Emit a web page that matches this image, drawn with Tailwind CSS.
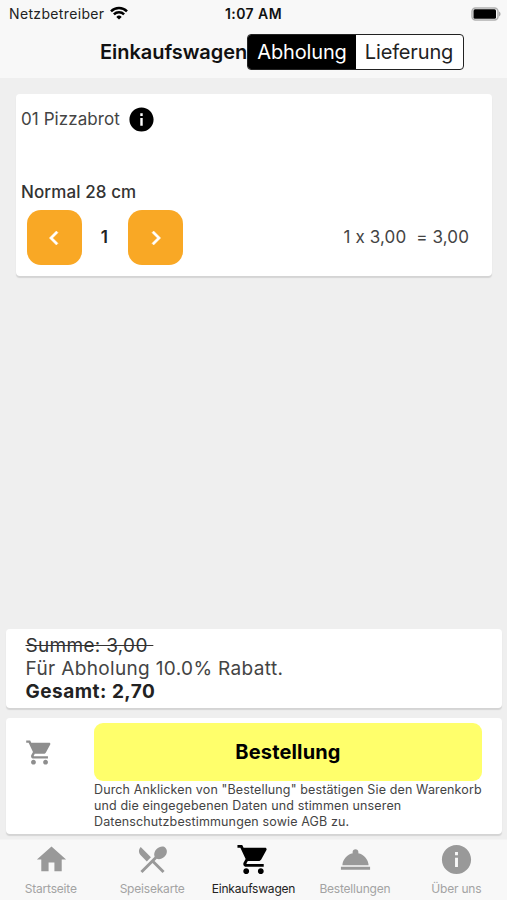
<!DOCTYPE html>
<html lang="de">
<head>
<meta charset="utf-8">
<title>Einkaufswagen</title>
<script src="https://cdn.jsdelivr.net/npm/@tailwindcss/browser@4"></script>
</head>
<body class="w-[507px] h-[900px] overflow-hidden bg-[#efefef] font-['Inter',sans-serif] [font-feature-settings:'calt'_0] text-[#333] flex flex-col whitespace-nowrap">
<svg class="hidden">
  <symbol id="cart" viewBox="0 0 24 24"><path d="M7 18c-1.1 0-1.99.9-1.99 2S5.9 22 7 22s2-.9 2-2-.9-2-2-2zM1 2v2h2l3.6 7.59-1.35 2.45c-.16.28-.25.61-.25.96 0 1.1.9 2 2 2h12v-2H7.42c-.14 0-.25-.11-.25-.25l.03-.12.9-1.63h7.45c.75 0 1.41-.41 1.75-1.03l3.58-6.49c.08-.14.12-.31.12-.48 0-.55-.45-1-1-1H5.21l-.94-2H1zm16 16c-1.1 0-1.99.9-1.99 2s.89 2 1.99 2 2-.9 2-2-.9-2-2-2z"/></symbol>
  <symbol id="info" viewBox="0 0 24 24"><path d="M12 2C6.480 2 2 6.480 2 12s4.480 10 10 10 10-4.480 10-10S17.520 2 12 2zm1 15.200h-2v-6.400h2v6.400zm0-8.100h-2V6.900h2v2.200z"/></symbol>
</svg>

<header class="h-[78px] shrink-0 bg-[#f8f8f8] flex flex-col">
  <div class="h-7 grid grid-cols-3 items-center text-[#111] text-[14px] leading-[28px]">
    <div class="flex items-center pl-[9px]">
      <span class="tracking-[0.350px] text-[#222]">Netzbetreiber</span>
      <svg class="ml-[6px] w-[18px] h-[14px] -mt-[2px]" viewBox="0 0 18 14" fill="none" stroke="#000" stroke-width="2.500">
        <path d="M1 5.300a11.400 11.400 0 0 1 16 0M3.900 8.300a7.200 7.200 0 0 1 10.200 0"/>
        <path d="M9 13.600L6.300 10.900a3.900 3.900 0 0 1 5.400 0z" fill="#000" stroke="none"/>
      </svg>
    </div>
    <div class="text-center font-semibold tracking-[0.450px]">1:07 AM</div>
    <div class="flex justify-end pr-[6px]">
      <svg class="w-[30px] h-[14px]" viewBox="0 0 30 14">
        <rect x="1" y="1" width="26" height="12" rx="3.500" fill="#f8f8f8" stroke="#b0b0b0" stroke-width="1.500"/>
        <rect x="2.500" y="2.300" width="22.500" height="9.400" rx="1.500" fill="#000"/>
        <path d="M28 4.500c2 .8 2 4.200 0 5z" fill="#aaa"/>
      </svg>
    </div>
  </div>
  <div class="flex pl-[100px] pt-[6px] text-[20px] leading-[35px]">
    <h1 class="w-[147px] pt-px font-semibold tracking-[-0.050px] text-[#111]">Einkaufswagen</h1>
    <div class="w-[217px] h-[36px] flex border border-[#222] rounded-[4px] bg-white overflow-hidden tracking-[-0.150px]">
      <div class="w-[108px] bg-black text-white text-center">Abholung</div>
      <div class="flex-1 pr-px text-center text-[#222]">Lieferung</div>
    </div>
  </div>
</header>

<main class="flex-1 flex flex-col">
  <section class="mt-4 mx-auto w-[476px] h-[182px] rounded-[4px] bg-white shadow-[0_2px_1px_#d4d4d4] flex flex-col relative left-[0.500px]">
    <div class="h-[51px] flex items-center pl-[5px] text-[17px] text-[#444]">
      <span class="tracking-[0.080px]">01 Pizzabrot</span>
      <svg class="ml-[7px] size-[29px]" fill="#000"><use href="#info"/></svg>
    </div>
    <div class="mt-[35px] pl-[5px] text-[17px] leading-[24px] font-medium tracking-[0.100px]">Normal 28 cm</div>
    <div class="mt-[6px] h-[55px] pl-[10.500px] pr-[23px] flex items-center text-[17px]">
      <button class="size-[55px] rounded-[14px] bg-[#f9a825] flex items-center justify-center"><svg class="size-[28px]" viewBox="0 0 24 24" fill="#fff" stroke="#fff" stroke-width=".4"><path d="M15.410 7.410L14 6l-6 6 6 6 1.410-1.410L10.830 12z"/></svg></button>
      <span class="w-[46.500px] pr-px text-center font-semibold text-[#222]">1</span>
      <button class="size-[55px] rounded-[14px] bg-[#f9a825] flex items-center justify-center"><svg class="size-[28px]" viewBox="0 0 24 24" fill="#fff" stroke="#fff" stroke-width=".4"><path d="M10 6L8.590 7.410 13.170 12l-4.580 4.590L10 18l6-6z"/></svg></button>
      <span class="ml-auto whitespace-pre tracking-[0.130px] text-[#444]">1 x 3,00  = 3,00</span>
    </div>
  </section>

  <div class="flex-1"></div>

  <section class="mx-auto w-[496px] h-[79px] rounded-[4px] bg-white shadow-[0_2px_1px_#d4d4d4] pl-[19.500px] pt-[5px] text-[19px] leading-[23px] relative left-[0.500px]">
    <div><span class="line-through whitespace-pre tracking-[0.300px]">Summe: 3,00 </span></div>
    <div class="text-[#444] tracking-[0.350px]">Für Abholung 10.0% Rabatt.</div>
    <div class="font-bold text-[#222] tracking-[0.500px]">Gesamt: 2,70</div>
  </section>

  <section class="mt-[10px] mb-[5px] mx-auto w-[496px] h-[116px] rounded-[4px] bg-white shadow-[0_2px_1px_#d4d4d4] flex relative left-[0.500px]">
    <div class="w-[88px] pl-[19px] pt-[20px]"><svg class="size-[29px]" fill="#8e8e8e"><use href="#cart"/></svg></div>
    <div class="pt-[5px]">
      <button class="block w-[388px] h-[58px] rounded-[9px] bg-[#ffff6b] text-[20px] font-bold tracking-[0.150px] text-black">Bestellung</button>
      <p class="mt-px text-[12.500px] leading-[16px] tracking-[0.130px] text-[#444]">Durch Anklicken von "Bestellung" bestätigen Sie den Warenkorb<br>und die eingegebenen Daten und stimmen unseren<br>Datenschutzbestimmungen sowie AGB zu.</p>
    </div>
  </section>
</main>

<nav class="h-[61px] shrink-0 bg-[#f8f8f8] border-t border-[#f3f3f3] grid grid-cols-5 text-[12px] leading-[14px] tracking-[-0.200px] text-[#a3a3a3] fill-[#999] pt-[2px]">
  <div class="flex flex-col items-center"><svg class="size-[35px] relative left-px" viewBox="0 0 24 24"><path d="M10 20v-6h4v6h5v-8h3L12 3 2 12h3v8z"/></svg><span class="mt-[5px]">Startseite</span></div>
  <div class="flex flex-col items-center"><svg class="size-[35px] relative left-[0.500px]" viewBox="0 0 24 24"><path d="M8.100 13.340l2.830-2.830L3.910 3.500c-1.560 1.560-1.560 4.090 0 5.660l4.190 4.180zm6.780-1.810c1.530.71 3.680.21 5.270-1.380 1.910-1.910 2.280-4.650.81-6.120-1.460-1.460-4.200-1.100-6.120.81-1.590 1.590-2.090 3.740-1.380 5.270L3.700 19.870l1.410 1.410L12 14.410l6.880 6.880 1.410-1.410L13.410 13l1.470-1.470z"/></svg><span class="mt-[5px]">Speisekarte</span></div>
  <div class="flex flex-col items-center text-[#222] fill-black"><svg class="size-[35px]"><use href="#cart"/></svg><span class="mt-[5px]">Einkaufswagen</span></div>
  <div class="flex flex-col items-center"><svg class="size-[35px] relative left-[0.500px]" viewBox="0 0 24 24"><path d="M2 17h20v2H2zm11.840-9.210c.1-.24.16-.51.16-.79 0-1.100-.9-2-2-2s-2 .9-2 2c0 .28.06.55.16.79C6.250 8.600 3.270 11.930 3 16h18c-.27-4.070-3.250-7.400-7.160-8.210z"/></svg><span class="mt-[5px]">Bestellungen</span></div>
  <div class="flex flex-col items-center"><svg class="size-[35px]"><use href="#info"/></svg><span class="mt-[5px]">Über uns</span></div>
</nav>
</body>
</html>
